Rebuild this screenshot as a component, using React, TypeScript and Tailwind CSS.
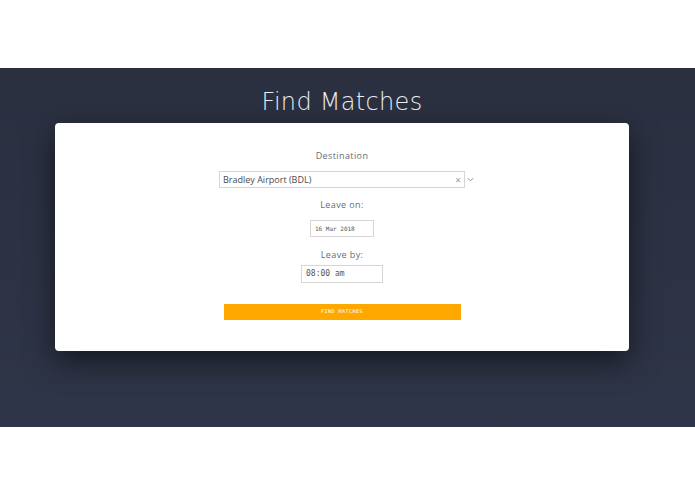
import React from 'react';

export default function App() {
  return (
    <div className="w-[695px] h-[494px] bg-white flex flex-col" style={{ fontFamily: '"Open Sans", sans-serif' }}>
      <div className="h-[68px]" />
      <section className="h-[359px] bg-gradient-to-b from-[#2a3040] to-[#2f3548] flex flex-col items-center pr-[11px]">
        <h1 className="mt-[20px] h-[35px] text-[24px] leading-[28px] font-extralight text-[#eceef2] tracking-[0.3px]" style={{ fontFamily: '"DejaVu Sans", sans-serif' }}>
          Find Matches
        </h1>
        <div className="w-[574px] h-[228px] bg-white rounded-[4px] shadow-[0_10px_30px_rgba(0,0,0,0.55)] flex flex-col items-center pt-[27px]">
          <label className="text-[9px] text-[#666c7a] tracking-[0.4px] h-[12px] leading-[12px]">Destination</label>
          <div className="mt-[9px] flex items-center">
            <div className="w-[246px] h-[17px] border border-[#d6d6d6] flex items-center px-[3px] text-[9px] text-[#4a4a4a]">
              <span>Bradley Airport (BDL)</span>
              <span className="ml-auto text-[10px] text-[#999] leading-none">×</span>
            </div>
            <svg width="9" height="9" viewBox="0 0 10 10" className="ml-[1px] -mr-[10px]">
              <path d="M2 3.5 L5 6.5 L8 3.5" fill="none" stroke="#888" strokeWidth="1" />
            </svg>
          </div>
          <label className="mt-[11px] text-[9px] text-[#666c7a] tracking-[0.4px] h-[12px] leading-[12px]">Leave on:</label>
          <div className="mt-[9px] w-[64px] h-[17px] border border-[#d6d6d6] flex items-center px-[4px] text-[6px] text-[#555]" style={{ fontFamily: '"DejaVu Sans Mono", monospace' }}>
            16 Mar 2018
          </div>
          <label className="mt-[12px] text-[9px] text-[#666c7a] tracking-[0.4px] h-[12px] leading-[12px]">Leave by:</label>
          <div className="mt-[4px] w-[82px] h-[18px] border border-[#d6d6d6] flex items-center px-[4px] text-[8px] text-[#555]" style={{ fontFamily: '"DejaVu Sans Mono", monospace' }}>
            08:00 am
          </div>
          <button className="mt-[21px] w-[237px] h-[16px] bg-[#ffa800] text-white text-[5px] tracking-[0.5px] flex items-center justify-center" style={{ fontFamily: '"DejaVu Sans Mono", monospace' }}>
            FIND MATCHES
          </button>
        </div>
      </section>
    </div>
  );
}
